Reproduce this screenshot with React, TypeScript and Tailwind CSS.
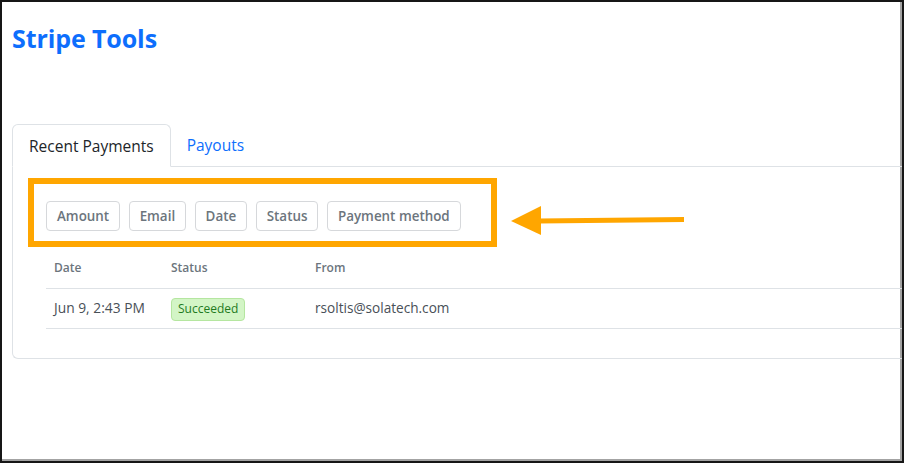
import React from "react";

const filters = ["Amount", "Email", "Date", "Status", "Payment method"];

export default function App() {
  return (
    <div
      className="relative w-[904px] h-[463px] overflow-hidden bg-white border-2 border-[#161616]"
      style={{ fontFamily: '"Open Sans", "Noto Sans", sans-serif' }}
    >
      <div className="h-full w-full border-r-2 border-b-2 border-[#a3a3a3] pl-[10px]">
        <h1 className="pt-[18px] text-[25px] leading-[36px] font-bold text-[#0d6efd] tracking-[-0.1px]">
          Stripe Tools
        </h1>

        {/* tabs */}
        <div className="mt-[68px] w-[1000px]">
          <div className="flex border-b border-[#dee2e6]">
            <div className="-mb-px rounded-t-[6px] border border-[#dee2e6] border-b-white bg-white px-4 pt-[9px] pb-2 text-[15.5px] leading-6 text-[#212529]">
              Recent Payments
            </div>
            <div className="px-4 pt-[9px] pb-2 text-[15.5px] leading-6 text-[#0d6efd]">Payouts</div>
          </div>

          {/* tab panel */}
          <div className="h-[192px] rounded-bl-[6px] border-l border-b border-[#dee2e6] pl-[33px] pt-[34px]">
            <div className="flex gap-[8.5px]">
              {filters.map((f) => (
                <button
                  key={f}
                  className="h-[30px] rounded-[4px] border border-[#d6d8db] bg-white px-[10px] text-[13.4px] font-semibold text-[#6c757d]"
                >
                  {f}
                </button>
              ))}
            </div>

            <table className="mt-[17px] w-[900px] border-collapse text-left">
              <thead>
                <tr className="h-[40px] border-b border-[#dee2e6]">
                  <th className="w-[117px] px-2 text-[12px] font-semibold text-[#6c757d]">Date</th>
                  <th className="w-[144px] px-2 text-[12px] font-semibold text-[#6c757d]">Status</th>
                  <th className="px-2 text-[12px] font-semibold text-[#6c757d]">From</th>
                </tr>
              </thead>
              <tbody>
                <tr className="h-[40px] border-b border-[#dee2e6]">
                  <td className="px-2 text-[13.8px] text-[#495057]">Jun 9, 2:43 PM</td>
                  <td className="px-2">
                    <span className="inline-flex h-[23px] items-center rounded-[4px] border border-[#b5e6a0] bg-[#d3f5c6] px-[6px] text-[12px] text-[#1f7a1f]">
                      Succeeded
                    </span>
                  </td>
                  <td className="px-2 text-[13.6px] text-[#495057]">rsoltis@solatech.com</td>
                </tr>
              </tbody>
            </table>
          </div>
        </div>
      </div>

      {/* callout frame around the filter buttons */}
      <div className="absolute left-[26px] top-[176px] h-[69px] w-[469px] border-[6px] border-[#ffa600]" />

      {/* callout arrow */}
      <svg className="absolute left-[504px] top-[198px]" width="190" height="40" viewBox="0 0 190 40">
        <polygon points="5,21 35,6 35,35" fill="#ffa600" />
        <polygon points="33,18.5 178,17 178,22 33,23.5" fill="#ffa600" />
      </svg>
    </div>
  );
}
